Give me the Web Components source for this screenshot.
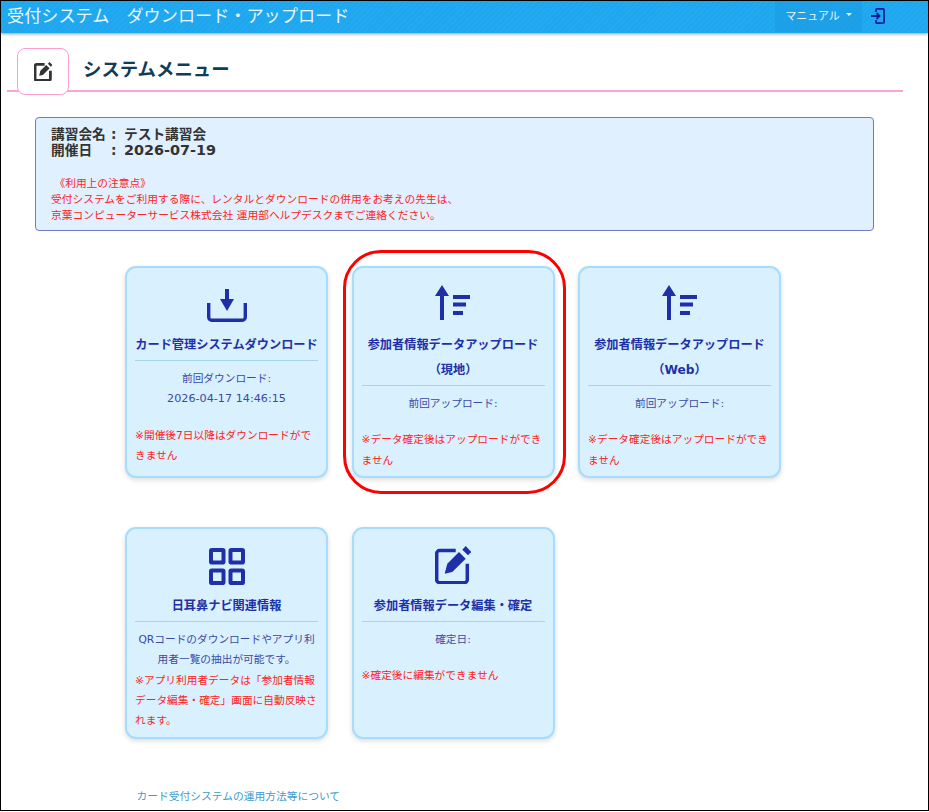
<!DOCTYPE html>
<html lang="ja">
<head>
<meta charset="utf-8">
<title>システムメニュー</title>
<style>
  html, body { margin: 0; background: #fff; }
  body {
    font-family: "DejaVu Sans", "Noto Sans CJK JP", sans-serif;
    width: 929px;
    height: 811px;
    box-sizing: border-box;
    border: 1px solid #000;
    overflow: hidden;
  }
</style>
</head>
<body>
<top-bar></top-bar>
<page-heading>システムメニュー</page-heading>
<notice-box></notice-box>
<menu-grid>
  <menu-card icon="download">
    <span slot="title">カード管理システムダウンロード</span>
    前回ダウンロード:<br><span style="font-size:11.2px">2026-04-17 14:46:15</span>
    <span slot="note">※開催後7日以降はダウンロードができません</span>
  </menu-card>
  <menu-card icon="upload" ringed>
    <span slot="title">参加者情報データアップロード<br>（現地）</span>
    前回アップロード:
    <span slot="note">※データ確定後はアップロードができません</span>
  </menu-card>
  <menu-card icon="upload">
    <span slot="title">参加者情報データアップロード<br>（Web）</span>
    前回アップロード:
    <span slot="note">※データ確定後はアップロードができません</span>
  </menu-card>
  <menu-card icon="grid" tight>
    <span slot="title">日耳鼻ナビ関連情報</span>
    QRコードのダウンロードやアプリ利用者一覧の抽出が可能です。
    <span slot="note">※アプリ利用者データは「参加者情報データ編集・確定」画面に自動反映されます。</span>
  </menu-card>
  <menu-card icon="edit">
    <span slot="title">参加者情報データ編集・確定</span>
    確定日:
    <span slot="note">※確定後に編集ができません</span>
  </menu-card>
</menu-grid>
<foot-link>カード受付システムの運用方法等について</foot-link>

<script>
const editPaths = (stroke) => `
      <path d="M20.700 4.500H4.700a3 3 0 0 0-3 3v26.200a3 3 0 0 0 3 3h24.600a3 3 0 0 0 3-3V17.700" fill="none" stroke="currentColor" stroke-width="${stroke}"/>
      <path d="M9.700 27.700l2.600-10L24 6l6.700 6.700L17.300 26z" fill="currentColor"/>
      <path d="M27.300 3.700L30.700 0l5.600 6L33 9.300z" fill="currentColor"/>`;

const ICONS = {
  download: `<svg style="margin-top:4px" width="40" height="33" viewBox="0 0 40 33">
      <path d="M1.700 14v14.300a3 3 0 0 0 3 3h30.600a3 3 0 0 0 3-3V14" fill="none" stroke="currentColor" stroke-width="3.400"/>
      <path d="M18 0h4v10h5l-7 12-7-12h5z" fill="currentColor"/>
    </svg>`,
  upload: `<svg width="36" height="35" viewBox="0 0 36 35">
      <path d="M7 0l7 11h-5v24h-4v-24h-5z" fill="currentColor"/>
      <rect x="18" y="10" width="17" height="4" fill="currentColor"/>
      <rect x="18" y="17.500" width="13" height="4" fill="currentColor"/>
      <rect x="18" y="26" width="10" height="4" fill="currentColor"/>
    </svg>`,
  grid: `<svg style="margin-top:2px" width="36" height="37" viewBox="0 0 36 37" fill="none" stroke="currentColor" stroke-width="4">
      <rect x="2" y="2" width="12.500" height="12.500" rx=".8"/>
      <rect x="21.500" y="2" width="12.500" height="12.500" rx=".8"/>
      <rect x="2" y="22.500" width="12.500" height="12.500" rx=".8"/>
      <rect x="21.500" y="22.500" width="12.500" height="12.500" rx=".8"/>
    </svg>`,
  edit: `<svg width="37" height="38" viewBox="0 0 37 38">${editPaths(3.5)}</svg>`
};

class TopBar extends HTMLElement {
  constructor() {
    super();
    this.attachShadow({ mode: "open" });
    this.shadowRoot.innerHTML = `
      <style>
        :host {
          display: flex;
          align-items: stretch;
          height: 32px;
          color: #e9f6fe;
          background: repeating-linear-gradient(135deg, #1ea7ee 0 2px, #22a9ef 2px 4px);
          box-shadow: 0 1px 3px rgba(0, 0, 0, .4);
          position: relative;
        }
        .brand {
          font-size: 17.150px;
          line-height: 31px;
          padding-left: 6px;
          flex: 1;
          white-space: pre;
        }
        .manual {
          width: 87px;
          box-sizing: border-box;
          padding-bottom: 4px;
          display: flex;
          align-items: center;
          justify-content: center;
          gap: 6px;
          font-size: 10.900px;
          background: rgba(20, 130, 205, .22);
          margin-bottom: 1px;
        }
        .manual i {
          border: 3px solid transparent;
          border-top-color: #e9f6fe;
          border-bottom: 0;
        }
        .exit {
          width: 66px;
          padding: 7px 0 0 9px;
          box-sizing: border-box;
          color: #0a1f9e;
        }
      </style>
      <div class="brand">受付システム　ダウンロード・アップロード</div>
      <div class="manual">マニュアル<i></i></div>
      <div class="exit">
        <svg width="14" height="16" viewBox="0 0 14 16" fill="none" stroke="currentColor" stroke-width="1.800">
          <path d="M5 4V1.900a1 1 0 0 1 1-1h6a1 1 0 0 1 1 1v12.200a1 1 0 0 1-1 1H6a1 1 0 0 1-1-1V12"/>
          <path d="M0 8h8.500M5.500 5l3 3-3 3"/>
        </svg>
      </div>`;
  }
}

class PageHeading extends HTMLElement {
  constructor() {
    super();
    this.attachShadow({ mode: "open" });
    this.shadowRoot.innerHTML = `
      <style>
        :host {
          display: flex;
          margin: 15px 25px 0 6px;
          padding-left: 10px;
          height: 42px;
          border-bottom: 2px solid #fba6d2;
          color: #0f3c56;
        }
        .badge {
          width: 50px;
          height: 45px;
          flex: none;
          display: flex;
          align-items: center;
          justify-content: center;
          background: #fff;
          border: 1px solid #ff9fd0;
          border-radius: 8px;
          color: #333;
          position: relative;
        }
        h1 {
          margin: 0 0 0 14px;
          font-size: 18.400px;
          font-weight: bold;
          line-height: 44px;
        }
      </style>
      <div class="badge">
        <svg width="19" height="19" viewBox="0 0 37 38">${editPaths(5.5)}</svg>
      </div>
      <h1><slot></slot></h1>`;
  }
}

class NoticeBox extends HTMLElement {
  constructor() {
    super();
    this.attachShadow({ mode: "open" });
    this.shadowRoot.innerHTML = `
      <style>
        :host {
          display: block;
          margin: 25px 54px 0 34px;
          height: 114px;
          box-sizing: border-box;
          padding: 8px 15px 0;
          background: #e0f0ff;
          border: 1px solid #6f7cc4;
          border-radius: 4px;
        }
        .meta {
          font-size: 13.700px;
          font-weight: bold;
          line-height: 16px;
          color: #333;
        }
        .meta span { display: inline-block; }
        .label { width: 60px; }
        .colon { width: 13px; }
        .date { font-size: 14.400px; }
        .warn {
          margin-top: 18px;
          font-size: 10.740px;
          line-height: 16px;
          color: #f22;
        }
      </style>
      <div class="meta">
        <div><span class="label">講習会名</span><span class="colon">:</span>テスト講習会</div>
        <div><span class="label">開催日</span><span class="colon">:</span><span class="date">2026-07-19</span></div>
      </div>
      <div class="warn">&nbsp;《利用上の注意点》<br>
        受付システムをご利用する際に、レンタルとダウンロードの併用をお考えの先生は、<br>
        京葉コンピューターサービス株式会社 運用部ヘルプデスクまでご連絡ください。</div>`;
  }
}

class MenuGrid extends HTMLElement {
  constructor() {
    super();
    this.attachShadow({ mode: "open" });
    this.shadowRoot.innerHTML = `
      <style>
        :host {
          display: grid;
          grid-template-columns: repeat(3, 203px);
          grid-auto-rows: 212px;
          column-gap: 23.500px;
          row-gap: 49px;
          margin: 35px 0 0 124px;
        }
      </style>
      <slot></slot>`;
  }
}

class MenuCard extends HTMLElement {
  constructor() {
    super();
    this.attachShadow({ mode: "open" });
    const icon = ICONS[this.getAttribute("icon")] || "";
    this.shadowRoot.innerHTML = `
      <style>
        :host {
          display: block;
          position: relative;
          box-sizing: border-box;
          padding: 0 8px;
          background: #d9f0ff;
          border: 2px solid #a6dcfe;
          border-radius: 11px;
          box-shadow: 0 2px 5px rgba(0, 0, 0, .14);
          color: #3b4aa5;
          font-size: 10.700px;
          line-height: 20.250px;
        }
        .icon {
          height: 64px;
          box-sizing: border-box;
          padding-top: 17px;
          display: flex;
          align-items: flex-start;
          justify-content: center;
          color: #1f2fa8;
        }
        h2 {
          margin: 1px 0 0;
          padding-bottom: 2px;
          border-bottom: 1px solid #a5d5ea;
          font-size: 12.200px;
          font-weight: bold;
          line-height: 25px;
          text-align: center;
          white-space: nowrap;
          color: #1f2fa8;
        }
        .body {
          margin-top: 8px;
          text-align: center;
        }
        .note {
          margin-top: 16px;
          color: #f22;
        }
        :host([tight]) .note { margin-top: 0; }
        .ring {
          position: absolute;
          left: -11px;
          right: -13px;
          top: -18px;
          bottom: -18px;
          border: 3.300px solid #f00;
          border-radius: 38px;
          pointer-events: none;
        }
      </style>
      <div class="icon">${icon}</div>
      <h2><slot name="title"></slot></h2>
      <div class="body"><slot></slot></div>
      <div class="note"><slot name="note"></slot></div>
      ${this.hasAttribute("ringed") ? '<div class="ring"></div>' : ""}`;
  }
}

class FootLink extends HTMLElement {
  constructor() {
    super();
    this.attachShadow({ mode: "open" });
    this.shadowRoot.innerHTML = `
      <style>
        :host {
          display: block;
          margin: 48px 0 0 135.500px;
          font-size: 10.750px;
          line-height: 20px;
          color: #3f9bcf;
        }
      </style>
      <slot></slot>`;
  }
}

customElements.define("top-bar", TopBar);
customElements.define("page-heading", PageHeading);
customElements.define("notice-box", NoticeBox);
customElements.define("menu-grid", MenuGrid);
customElements.define("menu-card", MenuCard);
customElements.define("foot-link", FootLink);
</script>
</body>
</html>
